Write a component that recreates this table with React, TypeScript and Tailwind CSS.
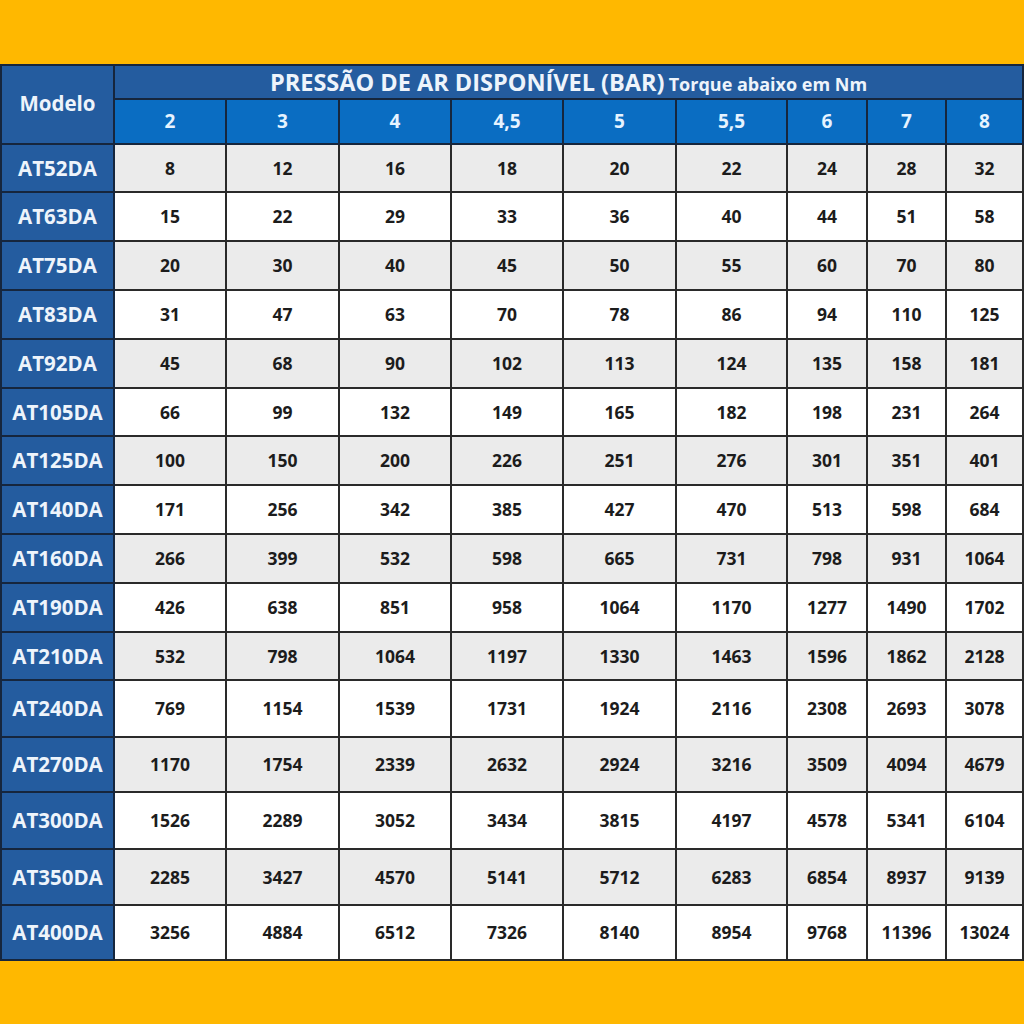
import React from 'react';

const pressures = ['2', '3', '4', '4,5', '5', '5,5', '6', '7', '8'];

const rows: { model: string; values: number[]; h: string }[] = [
  { model: 'AT52DA', values: [8, 12, 16, 18, 20, 22, 24, 28, 32], h: 'h-[48px]' },
  { model: 'AT63DA', values: [15, 22, 29, 33, 36, 40, 44, 51, 58], h: 'h-[49px]' },
  { model: 'AT75DA', values: [20, 30, 40, 45, 50, 55, 60, 70, 80], h: 'h-[49px]' },
  { model: 'AT83DA', values: [31, 47, 63, 70, 78, 86, 94, 110, 125], h: 'h-[49px]' },
  { model: 'AT92DA', values: [45, 68, 90, 102, 113, 124, 135, 158, 181], h: 'h-[49px]' },
  { model: 'AT105DA', values: [66, 99, 132, 149, 165, 182, 198, 231, 264], h: 'h-[48px]' },
  { model: 'AT125DA', values: [100, 150, 200, 226, 251, 276, 301, 351, 401], h: 'h-[49px]' },
  { model: 'AT140DA', values: [171, 256, 342, 385, 427, 470, 513, 598, 684], h: 'h-[49px]' },
  { model: 'AT160DA', values: [266, 399, 532, 598, 665, 731, 798, 931, 1064], h: 'h-[49px]' },
  { model: 'AT190DA', values: [426, 638, 851, 958, 1064, 1170, 1277, 1490, 1702], h: 'h-[49px]' },
  { model: 'AT210DA', values: [532, 798, 1064, 1197, 1330, 1463, 1596, 1862, 2128], h: 'h-[48px]' },
  { model: 'AT240DA', values: [769, 1154, 1539, 1731, 1924, 2116, 2308, 2693, 3078], h: 'h-[57px]' },
  { model: 'AT270DA', values: [1170, 1754, 2339, 2632, 2924, 3216, 3509, 4094, 4679], h: 'h-[55px]' },
  { model: 'AT300DA', values: [1526, 2289, 3052, 3434, 3815, 4197, 4578, 5341, 6104], h: 'h-[57px]' },
  { model: 'AT350DA', values: [2285, 3427, 4570, 5141, 5712, 6283, 6854, 8937, 9139], h: 'h-[56px]' },
  { model: 'AT400DA', values: [3256, 4884, 6512, 7326, 8140, 8954, 9768, 11396, 13024], h: 'h-[55px]' },
];

const App = () => {
  return (
    <div
      className="w-[1024px] h-[1024px] bg-[#ffb800] pt-[64px]"
      style={{ fontFamily: '"Open Sans", "Noto Sans", sans-serif' }}
    >
      <table className="table-fixed border-collapse w-[1022px]">
        <colgroup>
          <col className="w-[113px]" />
          <col className="w-[112px]" />
          <col className="w-[113px]" />
          <col className="w-[112px]" />
          <col className="w-[112px]" />
          <col className="w-[113px]" />
          <col className="w-[111px]" />
          <col className="w-[80px]" />
          <col className="w-[79px]" />
          <col className="w-[77px]" />
        </colgroup>
        <thead>
          <tr className="h-[34px]">
            <th
              rowSpan={2}
              className="bg-[#245c9f] border-2 border-[#16263d] text-[20.5px] font-bold text-[#eef4fb] pb-[2px]"
            >
              Modelo
            </th>
            <th
              colSpan={9}
              className="bg-[#245c9f] border-2 border-[#16263d] text-[#eef4fb] font-bold whitespace-nowrap leading-none pt-[2px]"
            >
              <span className="text-[23.5px]">PRESSÃO DE AR DISPONÍVEL (BAR)</span>{' '}
              <span className="text-[18px]">Torque abaixo em Nm</span>
            </th>
          </tr>
          <tr className="h-[45px]">
            {pressures.map(p => (
              <th
                key={p}
                className="bg-[#0a6dc2] border-2 border-[#16263d] text-[19px] font-bold text-[#e6f3ff]"
              >
                {p}
              </th>
            ))}
          </tr>
        </thead>
        <tbody>
          {rows.map((row, i) => (
            <tr key={row.model} className={row.h}>
              <td className="bg-[#245c9f] border-2 border-[#16263d] text-center text-[20.5px] font-bold text-[#eef4fb]">
                {row.model}
              </td>
              {row.values.map((v, j) => (
                <td
                  key={j}
                  className={`border-2 border-[#2a2a2a] text-center text-[17.5px] font-bold text-[#1c1c1c] ${
                    i % 2 === 0 ? 'bg-[#ebebeb]' : 'bg-white'
                  }`}
                >
                  {v}
                </td>
              ))}
            </tr>
          ))}
        </tbody>
      </table>
    </div>
  );
};

export default App;
